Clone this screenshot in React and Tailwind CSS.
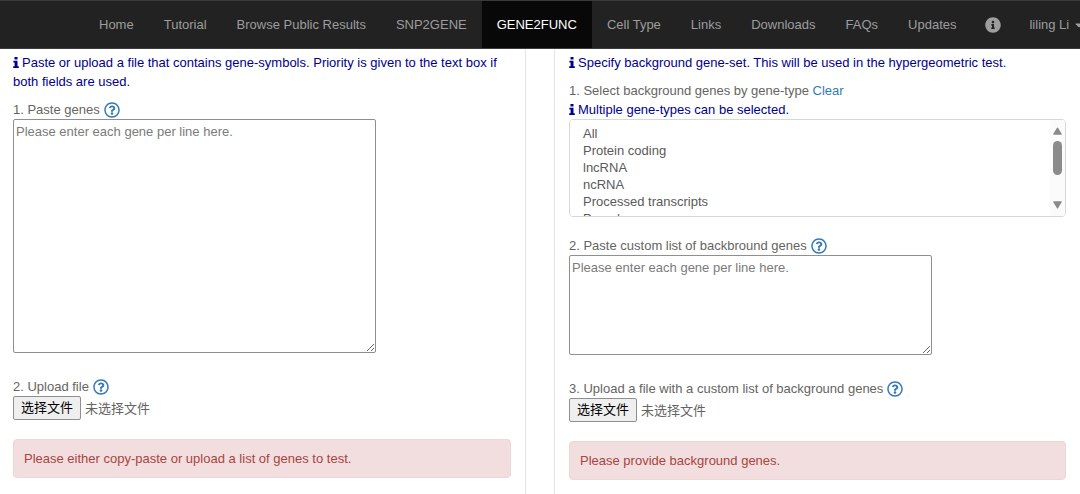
import { useRef, useState } from 'react';
import { FaCaretDown, FaInfo, FaInfoCircle, FaRegQuestionCircle } from 'react-icons/fa';

const NAV_ITEMS = ['Home', 'Tutorial', 'Browse Public Results', 'SNP2GENE', 'GENE2FUNC', 'Cell Type', 'Links', 'Downloads', 'FAQs', 'Updates'];

const GENE_TYPES = ['All', 'Protein coding', 'lncRNA', 'ncRNA', 'Processed transcripts', 'Pseudogene', 'IG genes', 'TR genes'];

function Navbar({ active }) {
  return (
    <nav className="overflow-hidden border-t border-b border-t-[#3a3a3a] border-b-[#3a3a3a] bg-[#222222]">
      <ul className="flex pl-[84px] leading-[47px] whitespace-nowrap text-[#9d9d9d]">
        {NAV_ITEMS.map(item => (
          <li key={item}>
            <a href="#" className={`block px-[15px] ${item === active ? 'bg-[#080808] text-white' : 'hover:text-white'}`}>{item}</a>
          </li>
        ))}
        <li>
          <a href="#" aria-label="Info" className="flex h-[47px] items-center px-[14px]"><FaInfoCircle className="size-4" /></a>
        </li>
        <li>
          <a href="#" className="flex items-center gap-1 px-[14px]">liling Li <FaCaretDown className="size-3 shrink-0" /></a>
        </li>
      </ul>
    </nav>
  );
}

function Info({ children }) {
  return (
    <p className="text-[#00008b]">
      <svg className="mr-[3px] inline h-[11px] w-[6px] align-[-1px]" viewBox="0 0 6 11" fill="currentColor" aria-hidden="true">
        <path d="M1.5 0h3v2.4h-3zM.4 3.8h4.1v5.4h1.3V11H.2V9.200h1.400V5.600H.4z" />
      </svg>
      {children}
    </p>
  );
}

function Help() {
  return (
    <a href="#" aria-label="Help" className="text-[#337ab7]"><FaRegQuestionCircle className="size-4" /></a>
  );
}

function FieldLabel({ htmlFor, children }) {
  return (
    <div className="flex items-center gap-1">
      <label htmlFor={htmlFor}>{children}</label>
      <Help />
    </div>
  );
}

function GeneBox({ id, className }) {
  return (
    <textarea
      id={id}
      placeholder="Please enter each gene per line here."
      className={`block w-[363px] max-w-full resize rounded-xs border border-[#8f8f8f] px-[2px] py-[2px] leading-[19px] placeholder:text-[#7b7b7b] ${className}`}
    />
  );
}

function FilePicker({ id }) {
  const input = useRef(null);
  const [name, setName] = useState('');
  return (
    <div className="flex items-center gap-1">
      <input ref={input} id={id} type="file" className="hidden" onChange={e => setName(e.target.files[0]?.name || '')} />
      <button type="button" onClick={() => input.current.click()}
        className="h-6 rounded-xs border border-[#8f8f8f] bg-[#efefef] px-[7px] leading-5 text-black">
        选择文件
      </button>
      <span>{name || '未选择文件'}</span>
    </div>
  );
}

function Alert({ children }) {
  return (
    <div role="alert" className="rounded border border-[#eed5d8] bg-[#f2dede] px-[10px] py-[9px] text-[#a94442]">{children}</div>
  );
}

function GeneTypeSelect() {
  return (
    <div className="relative">
      <select id="gene-type" multiple
        className="block h-[98px] w-full rounded border border-[#d8d8d8] bg-white py-[6px] pl-[11px] text-[#5a5a5a] [scrollbar-width:none]">
        {GENE_TYPES.map(t => <option key={t} className="h-[17px] px-[2px] pb-px">{t}</option>)}
      </select>
      <svg className="pointer-events-none absolute top-px right-px" width="15" height="96" viewBox="0 0 15 96" aria-hidden="true">
        <rect width="15" height="96" rx="2" fill="#fbfbfb" />
        <path d="M3.200 14 6.800 8q.7-1 1.400 0L11.800 14q.3.8-.6.8H3.800q-.9 0-.6-.8z" fill="#8b8b8b" />
        <rect x="3" y="21" width="9" height="34" rx="4.500" fill="#8b8b8b" />
        <path d="M3.200 82 6.800 88q.7 1 1.400 0L11.800 82q.3-.8-.6-.8H3.800q-.9 0-.6.8z" fill="#8b8b8b" />
      </svg>
    </div>
  );
}

export default function App() {
  return (
    <div className="min-h-screen bg-white font-['Liberation_Sans',Arial,'Noto_Sans_CJK_SC',sans-serif] text-[13px] leading-[19px] text-[#66645f]">
      <Navbar active="GENE2FUNC" />
      <main className="grid min-h-[calc(100vh-49px)] grid-cols-2 gap-7">
        <section className="border-r border-[#e3e3e3] pt-1 pr-[14px] pl-[13px]">
          <Info>Paste or upload a file that contains gene-symbols. Priority is given to the text box if both fields are used.</Info>
          <div className="mt-[9px]">
            <FieldLabel htmlFor="genes">1. Paste genes</FieldLabel>
            <GeneBox id="genes" className="h-[234px]" />
          </div>
          <div className="mt-6">
            <FieldLabel htmlFor="genes-file">2. Upload file</FieldLabel>
            <FilePicker id="genes-file" />
          </div>
          <div className="mt-[19px]">
            <Alert>Please either copy-paste or upload a list of genes to test.</Alert>
          </div>
        </section>

        <section className="border-l border-[#e3e3e3] pt-1 pr-[14px] pl-[14px]">
          <Info>Specify background gene-set. This will be used in the hypergeometric test.</Info>
          <div className="mt-[9px]">
            <label htmlFor="gene-type">1. Select background genes by gene-type</label>{' '}
            <a href="#" className="text-[#337ab7]">Clear</a>
            <Info>Multiple gene-types can be selected.</Info>
            <GeneTypeSelect />
          </div>
          <div className="mt-[19px]">
            <FieldLabel htmlFor="bkg-genes">2. Paste custom list of backbround genes</FieldLabel>
            <GeneBox id="bkg-genes" className="h-[100px]" />
          </div>
          <div className="mt-6">
            <FieldLabel htmlFor="bkg-file">3. Upload a file with a custom list of background genes</FieldLabel>
            <FilePicker id="bkg-file" />
          </div>
          <div className="mt-[19px]">
            <Alert>Please provide background genes.</Alert>
          </div>
        </section>
      </main>
    </div>
  );
}
